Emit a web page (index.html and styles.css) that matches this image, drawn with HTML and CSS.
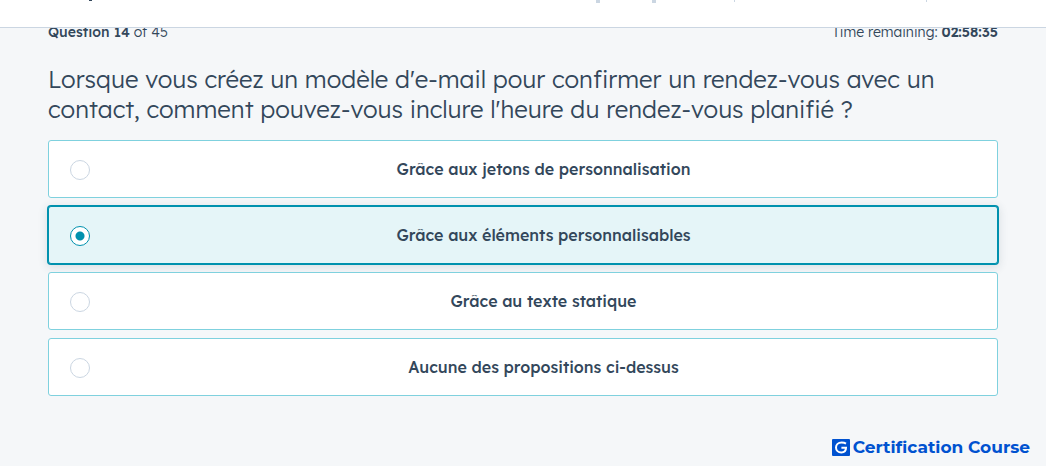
FILE: index.html
```html
<!DOCTYPE html>
<html lang="fr">
<head>
<meta charset="utf-8">
<meta name="viewport" content="width=device-width, initial-scale=1">
<title>Certification Course</title>
<link rel="stylesheet" href="styles.css">
</head>
<body>
<header class="topbar">
  <svg class="topbar-marks" width="840" height="4" aria-hidden="true">
    <path d="M1 0h3v1h-3z" fill="#33475b"/>
    <path d="M508 0h4v3h-4zM564 0h4v3h-4z" fill="#cbd6e2"/>
    <path d="M646 0h1v2h-1zM838 0h1v2h-1z" fill="#cbd6e2"/>
  </svg>
</header>
<main class="exam">
  <div class="meta">
    <span><strong class="count">Question 14</strong> of 45</span>
    <span>Time remaining: <strong class="clock">02:58:35</strong></span>
  </div>
  <form>
    <fieldset class="question">
      <legend class="prompt">Lorsque vous créez un modèle d'e-mail pour confirmer un rendez-vous avec un contact, comment pouvez-vous inclure l'heure du rendez-vous planifié ?</legend>
      <div class="options">
        <label class="option"><input class="radio" type="radio" name="answer"><span class="option-text">Grâce aux jetons de personnalisation</span></label>
        <label class="option"><input class="radio" type="radio" name="answer" checked><span class="option-text">Grâce aux éléments personnalisables</span></label>
        <label class="option"><input class="radio" type="radio" name="answer"><span class="option-text">Grâce au texte statique</span></label>
        <label class="option"><input class="radio" type="radio" name="answer"><span class="option-text">Aucune des propositions ci-dessus</span></label>
      </div>
    </fieldset>
  </form>
</main>
<footer class="brand">
  <svg width="18" height="17" viewBox="0 0 18 17" aria-hidden="true">
    <rect width="18" height="17" rx="1" fill="#0052d0"/>
    <path d="M14 4.6C12.9 3.9 11.3 3.6 9.6 3.6C6.2 3.6 4 5.7 4 8.5s2.2 4.9 5.3 4.9c2.8 0 4.7-1.6 4.7-4.6H9.4" fill="none" stroke="#fff" stroke-width="2"/>
  </svg>
  <span>Certification Course</span>
</footer>
</body>
</html>
```
FILE: styles.css
```css
* {
  box-sizing: border-box;
}

body {
  margin: 0;
  background: #f5f7f9;
  color: #33475b;
  font-family: "Lexend Deca", Inter, "Open Sans", sans-serif;
}

.topbar {
  position: relative;
  height: 28px;
  padding-left: 88px;
  background: #fff;
  border-bottom: 1px solid #cbd6e2;
  overflow: hidden;
}

.topbar-marks {
  display: block;
}

.exam {
  padding: 0 48px;
}

.meta {
  display: flex;
  justify-content: space-between;
  margin-top: -6px;
  font-size: 14px;
  line-height: 20px;
  font-weight: 300;
}

.count {
  font-weight: 500;
}

.clock {
  font-weight: 600;
}

.question {
  min-width: 0;
  margin: 0;
  padding: 0;
  border: 0;
}

.prompt {
  padding: 22px 0 16px;
  font-size: 24px;
  line-height: 30px;
  font-weight: 300;
}

.options {
  display: grid;
  gap: 8px;
  padding-bottom: 8px;
}

.option {
  display: flex;
  align-items: center;
  gap: 20px;
  min-height: 58px;
  padding: 0 20px 0 21px;
  background: #fff;
  border: 1px solid #7fd1de;
  border-radius: 3px;
  font-size: 16px;
  line-height: 24px;
  font-weight: 500;
}

.option:has(:checked) {
  background: #e5f5f8;
  border-color: #0091ae;
  box-shadow: 0 0 0 1px #0091ae, 0 2px 8px 2px rgba(51, 71, 91, 0.12);
}

.option-text {
  flex: 1;
  text-align: center;
}

.radio {
  appearance: none;
  flex: none;
  width: 20px;
  height: 20px;
  margin: 2px 0 0;
  background: #fff;
  border: 1px solid #cbd6e2;
  border-radius: 50%;
}

.radio:checked {
  border-color: #0091ae;
  background: radial-gradient(circle, #0091ae 4px, #fff 5px);
}

.brand {
  display: flex;
  align-items: center;
  justify-content: flex-end;
  gap: 3px;
  padding: 31px 16px 8px;
  color: #0052d0;
  font-family: Montserrat, Inter, sans-serif;
  font-size: 17px;
  line-height: 24px;
  font-weight: 700;
}
```
